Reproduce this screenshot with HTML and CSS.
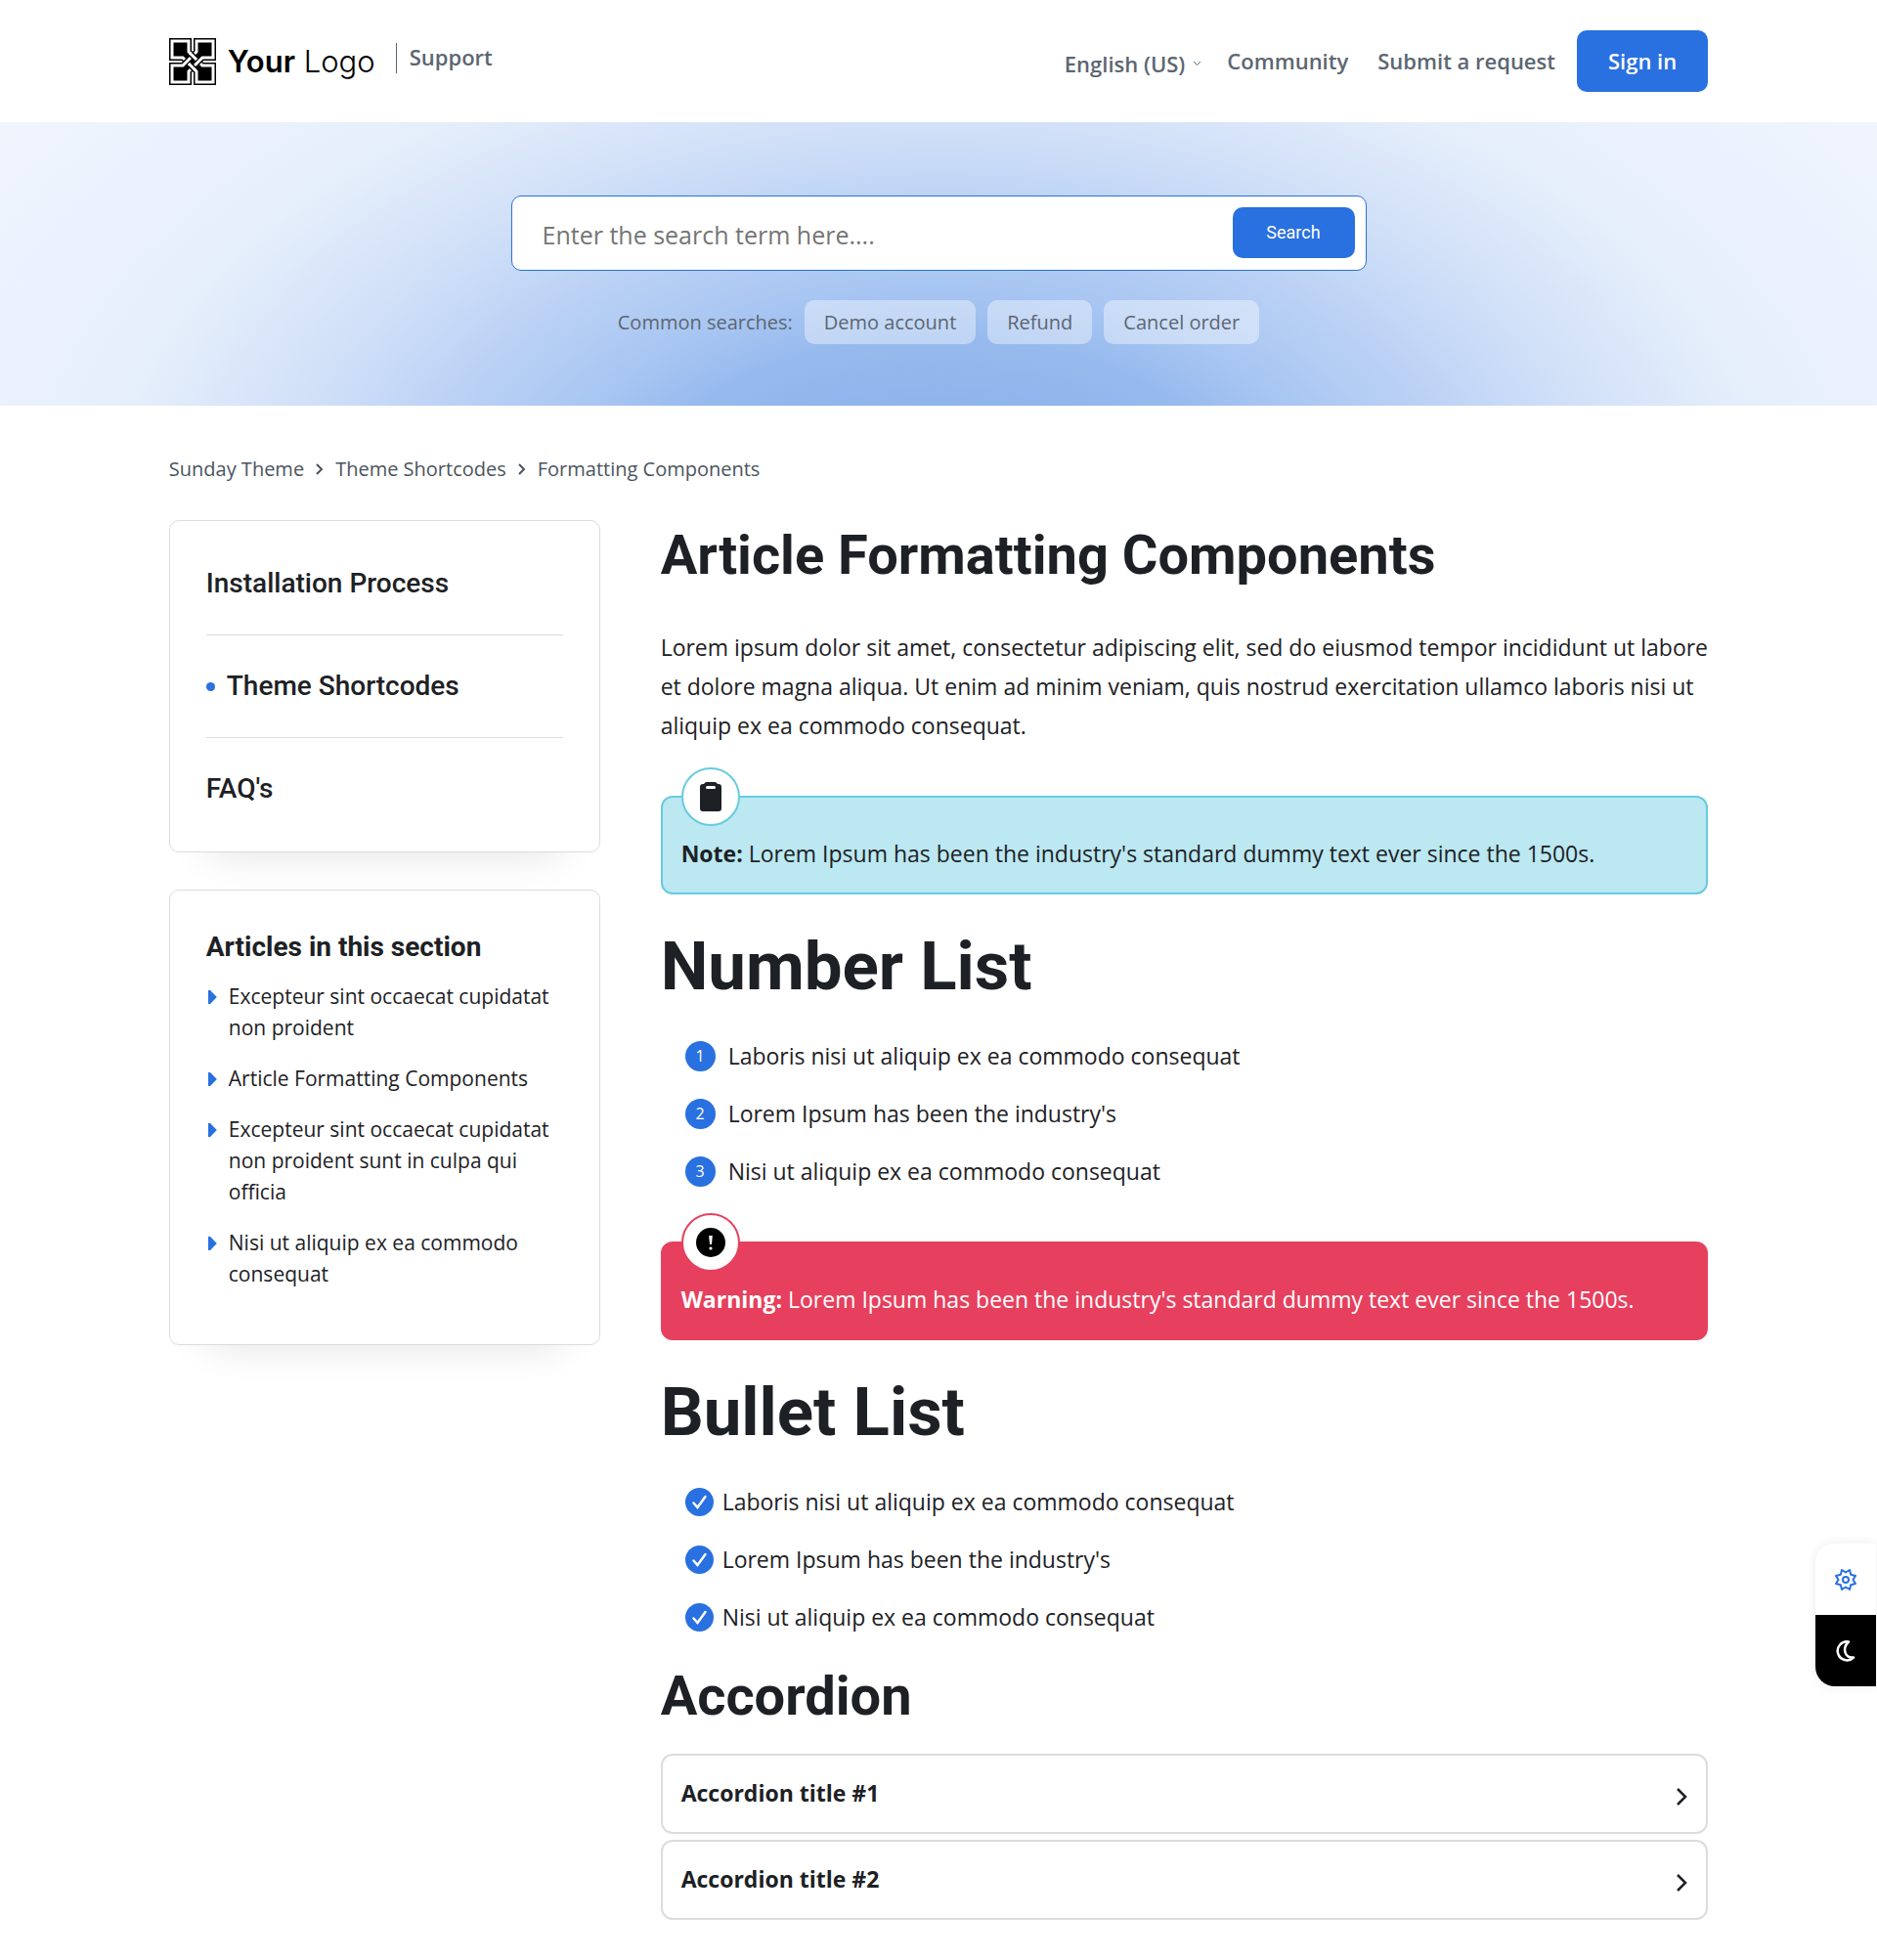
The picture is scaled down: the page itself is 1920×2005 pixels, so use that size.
FILE: index.html
```html
<!DOCTYPE html>
<html lang="en">
<head>
    <meta charset="UTF-8">
    <meta name="viewport" content="width=device-width, initial-scale=1.0">
    <title>Article Formatting Components</title>
    <link rel="stylesheet" href="styles.css">
</head>
<body>
    <header class="header container">
        <a class="logo" href="#">
            <svg class="logo-mark" viewBox="0 0 48 48" aria-hidden="true">
                <defs>
                    <path id="loop" d="M3 3H20V14L34 28H45V45H28V34L14 20H3Z"/>
                </defs>
                <g fill="#000">
                    <use href="#loop"/>
                    <use href="#loop" transform="rotate(90 24 24)"/>
                </g>
                <g fill="none" stroke="#000" stroke-width="6">
                    <use href="#loop"/>
                    <use href="#loop" stroke="#fff" stroke-width="3"/>
                    <use href="#loop" transform="rotate(90 24 24)"/>
                    <use href="#loop" transform="rotate(90 24 24)" stroke="#fff" stroke-width="3"/>
                </g>
                <!-- first loop passes back over the second one -->
                <path d="M22 16L27 21M21 27L26 32" stroke="#000" stroke-width="6"/>
                <path d="M21 15L28 22M20 26L27 33" stroke="#fff" stroke-width="3"/>
            </svg>
            <span class="logo-text"><b>Your</b> Logo</span>
        </a>
        <a class="support" href="#">Support</a>
        <nav class="nav">
            <button class="lang" type="button">English (US)
                <svg width="9" height="6" viewBox="0 0 9 6" aria-hidden="true"><path d="M1 1L4.5 4.5L8 1" fill="none" stroke="currentColor"/></svg>
            </button>
            <a href="#">Community</a>
            <a href="#">Submit a request</a>
            <a class="sign-in" href="#">Sign in</a>
        </nav>
    </header>

    <section class="hero">
        <form class="search">
            <input type="search" placeholder="Enter the search term here...." aria-label="Search">
            <button type="submit">Search</button>
        </form>
        <div class="common">
            <span>Common searches:</span>
            <a href="#">Demo account</a>
            <a href="#">Refund</a>
            <a href="#">Cancel order</a>
        </div>
    </section>

    <div class="container">
        <nav class="breadcrumbs" aria-label="Breadcrumb">
            <a href="#">Sunday Theme</a>
            <svg width="8" height="12" viewBox="0 0 8 12" aria-hidden="true"><path d="M1 1L6 6L1 11" fill="none" stroke="currentColor" stroke-width="2"/></svg>
            <a href="#">Theme Shortcodes</a>
            <svg width="8" height="12" viewBox="0 0 8 12" aria-hidden="true"><path d="M1 1L6 6L1 11" fill="none" stroke="currentColor" stroke-width="2"/></svg>
            <a href="#">Formatting Components</a>
        </nav>

        <div class="layout">
            <aside class="sidebar">
                <ul class="card sections">
                    <li><a href="#">Installation Process</a></li>
                    <li class="active"><a href="#">Theme Shortcodes</a></li>
                    <li><a href="#">FAQ's</a></li>
                </ul>
                <div class="card articles">
                    <h3>Articles in this section</h3>
                    <ul>
                        <li><a href="#">Excepteur sint occaecat cupidatat non proident</a></li>
                        <li><a href="#">Article Formatting Components</a></li>
                        <li><a href="#">Excepteur sint occaecat cupidatat non proident sunt in culpa qui officia</a></li>
                        <li><a href="#">Nisi ut aliquip ex ea commodo consequat</a></li>
                    </ul>
                </div>
            </aside>

            <main class="article">
                <h1>Article Formatting Components</h1>
                <p>Lorem ipsum dolor sit amet, consectetur adipiscing elit, sed do eiusmod tempor incididunt ut labore et dolore magna aliqua. Ut enim ad minim veniam, quis nostrud exercitation ullamco laboris nisi ut aliquip ex ea commodo consequat.</p>

                <div class="callout note">
                    <span class="callout-icon">
                        <svg width="22" height="30" viewBox="0 0 22 30" aria-hidden="true">
                            <path d="M7 0H15Q17 0 18 2H19A3 3 0 0 1 22 5V27A3 3 0 0 1 19 30H3A3 3 0 0 1 0 27V5A3 3 0 0 1 3 2H4Q5 0 7 0Z" fill="#1d2125"/>
                            <rect x="6" y="4" width="10" height="3" rx="1.5" fill="#fff"/>
                        </svg>
                    </span>
                    <strong>Note:</strong> Lorem Ipsum has been the industry's standard dummy text ever since the 1500s.
                </div>

                <h2>Number List</h2>
                <ol class="number-list">
                    <li>Laboris nisi ut aliquip ex ea commodo consequat</li>
                    <li>Lorem Ipsum has been the industry's</li>
                    <li>Nisi ut aliquip ex ea commodo consequat</li>
                </ol>

                <div class="callout warning">
                    <span class="callout-icon">
                        <svg width="30" height="30" viewBox="0 0 30 30" aria-hidden="true">
                            <circle cx="15" cy="15" r="15" fill="#000"/>
                            <path d="M13.200 8H16.800L16 17H14Z" fill="#fff"/>
                            <circle cx="15" cy="21" r="1.600" fill="#fff"/>
                        </svg>
                    </span>
                    <strong>Warning:</strong> Lorem Ipsum has been the industry's standard dummy text ever since the 1500s.
                </div>

                <h2>Bullet List</h2>
                <ul class="check-list">
                    <li><svg viewBox="0 0 29 29" aria-hidden="true"><circle cx="14.500" cy="14.500" r="14.500"/><path d="M8.500 15.500L12.500 20L20.500 9"/></svg>Laboris nisi ut aliquip ex ea commodo consequat</li>
                    <li><svg viewBox="0 0 29 29" aria-hidden="true"><circle cx="14.500" cy="14.500" r="14.500"/><path d="M8.500 15.500L12.500 20L20.500 9"/></svg>Lorem Ipsum has been the industry's</li>
                    <li><svg viewBox="0 0 29 29" aria-hidden="true"><circle cx="14.500" cy="14.500" r="14.500"/><path d="M8.500 15.500L12.500 20L20.500 9"/></svg>Nisi ut aliquip ex ea commodo consequat</li>
                </ul>

                <h2 class="small">Accordion</h2>
                <div class="accordion">
                    <button type="button">Accordion title #1
                        <svg width="12" height="18" viewBox="0 0 12 18" aria-hidden="true"><path d="M2 1L10 9L2 17" fill="none" stroke="currentColor" stroke-width="2.5"/></svg>
                    </button>
                    <button type="button">Accordion title #2
                        <svg width="12" height="18" viewBox="0 0 12 18" aria-hidden="true"><path d="M2 1L10 9L2 17" fill="none" stroke="currentColor" stroke-width="2.5"/></svg>
                    </button>
                </div>
            </main>
        </div>
    </div>

    <div class="theme-tools">
        <button class="settings" type="button" aria-label="Settings">
            <svg width="22" height="22" viewBox="0 0 22 22" fill="none" stroke="currentColor" stroke-width="2" stroke-linejoin="round" aria-hidden="true">
                <path d="M7 1L11 3.500L15 1L16.200 5.800L21 7L18.500 11L21 15L16.200 16.200L15 21L11 18.500L7 21L5.800 16.200L1 15L3.500 11L1 7L5.800 5.800Z"/>
                <circle cx="11" cy="11" r="3"/>
            </svg>
        </button>
        <button class="dark" type="button" aria-label="Dark mode">
            <svg width="20" height="22" viewBox="0 0 20 22" fill="none" stroke="currentColor" stroke-width="2.5" stroke-linejoin="round" aria-hidden="true">
                <path d="M13 1.500A9.500 9.500 0 1 0 18 17.500C9 18.500 6 8 13 1.500Z"/>
            </svg>
        </button>
    </div>
</body>
</html>
```

FILE: styles.css
```css
* {
    box-sizing: border-box;
}
body {
    margin: 0;
    background: #fff;
    color: #1d2125;
    font-family: "Open Sans", sans-serif;
    font-size: 23px;
    line-height: 40px;
}
a {
    color: inherit;
    text-decoration: none;
}
button {
    font: inherit;
    color: inherit;
    background: none;
    border: 0;
    padding: 0;
    cursor: pointer;
}
ul, ol {
    list-style: none;
    margin: 0;
    padding: 0;
}
h1, h2, h3 {
    font-family: Roboto, sans-serif;
    font-weight: 700;
    margin: 0;
}
.container {
    width: 82%;
    margin: 0 auto;
}

/* Header */
.header {
    display: flex;
    align-items: center;
    height: 125px;
    color: #5c6672;
    font-size: 22px;
    font-weight: 600;
}
.logo {
    display: flex;
    align-items: center;
    gap: 12px;
    color: #000;
}
.logo-mark {
    width: 48px;
    height: 48px;
}
.logo-text {
    font-family: Inter, sans-serif;
    font-size: 31px;
    font-weight: 300;
}
.logo-text b {
    font-weight: 600;
}
.support {
    margin: 0 0 6px 21px;
    padding: 0 0 3px 13px;
    border-left: 1px solid #5c6672;
    line-height: 28px;
}
.nav {
    display: flex;
    align-items: center;
    gap: 30px;
    margin-left: auto;
}
.nav a {
    padding-bottom: 2px;
}
.lang {
    display: flex;
    align-items: center;
    gap: 8px;
    padding-top: 4px;
    margin-right: -4px;
}
.nav .sign-in {
    margin-left: -8px;
    padding: 0 32px;
    line-height: 63px;
    border-radius: 10px;
    background: #2970e0;
    color: #fff;
}

/* Search */
.hero {
    padding: 75px 0 63px;
    background: radial-gradient(47% 186% at 50% 141%, #8fb4ec 22%, #97baee 35%, #a8c6f2 45%, #bcd2f5 60%, #d2e1f8 76%, #e5eefb 94%, #ebf2fd 110%, #f1f5fe 135%);
}
.search {
    display: flex;
    align-items: flex-start;
    width: 875px;
    max-width: 90%;
    height: 77px;
    margin: 0 auto;
    padding: 11px 11px 11px 31px;
    border: 1px solid #2970e0;
    border-radius: 10px;
    background: #fff;
}
.search input {
    flex: 1;
    min-width: 0;
    height: 55px;
    padding: 0;
    border: 0;
    outline: 0;
    font: inherit;
    font-size: 25px;
}
.search input::placeholder {
    color: #757575;
}
.search button {
    width: 125px;
    height: 52px;
    padding-bottom: 2px;
    border-radius: 10px;
    background: #2970e0;
    color: #fff;
    font: 400 18px Roboto, sans-serif;
}
.common {
    display: flex;
    justify-content: center;
    gap: 12px;
    margin-top: 30px;
    color: #5c6672;
    font-size: 20px;
    line-height: 45px;
}
.common a {
    padding: 0 20px;
    border-radius: 10px;
    background: rgba(255, 255, 255, 0.4);
}

/* Breadcrumbs */
.breadcrumbs {
    display: flex;
    align-items: center;
    gap: 12px;
    padding: 45px 0 32px;
    color: #4b545e;
    font-size: 20px;
}

/* Sidebar */
.layout {
    display: flex;
    align-items: flex-start;
    gap: 62px;
    padding-bottom: 30px;
}
.sidebar {
    flex: 0 0 28%;
}
.card {
    border: 1px solid #d9dce0;
    border-radius: 10px;
    background: #fff;
    box-shadow: 0 40px 40px -40px rgba(0, 0, 0, 0.12);
}
.sections {
    padding: 12px 37px;
    margin-bottom: 38px;
    font-family: Roboto, sans-serif;
    font-size: 28px;
    font-weight: 500;
    line-height: 104px;
}
.sections li + li {
    border-top: 1px solid #d9dce0;
}
.sections .active {
    display: flex;
    align-items: center;
    gap: 12px;
}
.active::before {
    content: "";
    width: 9px;
    height: 9px;
    border-radius: 50%;
    background: #2970e0;
}
.articles {
    padding: 38px 37px 56px;
}
.articles h3 {
    font-size: 28px;
    line-height: 40px;
    margin-bottom: 14px;
}
.articles ul {
    display: grid;
    gap: 20px;
    font-size: 21px;
    line-height: 32px;
}
.articles li {
    display: flex;
    align-items: flex-start;
    gap: 12px;
}
.articles li::before {
    content: "";
    flex: none;
    width: 9px;
    height: 14px;
    margin: 10px 0 0 2px;
    background: #2970e0;
    clip-path: polygon(0 0, 25% 0, 100% 50%, 25% 100%, 0 100%);
}

/* Article */
.article {
    flex: 1;
    min-width: 0;
}
h1, h2.small {
    font-size: 56px;
    line-height: 72px;
}
.article p {
    margin: 38px 0 52px;
}
h2 {
    font-size: 69px;
    line-height: 82px;
    margin: 33px 0 30px;
}
h2.small {
    margin: 25px 0 23px;
}
.callout {
    position: relative;
    padding: 37px 19px 20px;
    border: 2px solid;
    border-radius: 12px;
}
.callout-icon {
    position: absolute;
    top: -31px;
    left: 19px;
    display: grid;
    place-items: center;
    width: 60px;
    height: 60px;
    border: 2px solid;
    border-color: inherit;
    border-radius: 50%;
    background: #fff;
}
.note {
    border-color: #67cbdf;
    background: #bbe8f1;
}
.warning {
    border-color: #e6405e;
    background: #e6405e;
    color: #fff;
}
.number-list, .check-list {
    display: grid;
    gap: 19px;
    padding-left: 25px;
}
.number-list {
    counter-reset: item;
    margin-bottom: 52px;
}
.number-list li, .check-list li {
    display: flex;
    align-items: center;
    gap: 13px;
}
.number-list li::before {
    counter-increment: item;
    content: counter(item);
    width: 31px;
    border-radius: 50%;
    background: #2970e0;
    color: #fff;
    font-size: 16px;
    line-height: 31px;
    text-align: center;
}
.check-list li {
    gap: 9px;
}
.check-list svg {
    width: 29px;
    height: 29px;
    fill: #2970e0;
}
.check-list path {
    fill: none;
    stroke: #fff;
    stroke-width: 2.5;
    stroke-linecap: round;
}
.accordion {
    display: grid;
    gap: 6px;
}
.accordion button {
    display: flex;
    justify-content: space-between;
    align-items: center;
    height: 82px;
    padding: 0 19px 3px;
    border: 2px solid #dcdcdc;
    border-radius: 12px;
    font-weight: 700;
}
.accordion svg {
    margin-top: 8px;
}

/* Floating theme buttons */
.theme-tools {
    position: fixed;
    top: 1579px;
    right: 1px;
    display: grid;
    width: 62px;
    border-radius: 20px 0 0 20px;
    overflow: hidden;
    box-shadow: 0 0 12px rgba(0, 0, 0, 0.08);
}
.theme-tools button {
    display: grid;
    place-items: center;
    height: 73px;
}
.settings {
    background: #fff;
    color: #2970e0;
}
.theme-tools .dark {
    background: #000;
    color: #fff;
}
```
